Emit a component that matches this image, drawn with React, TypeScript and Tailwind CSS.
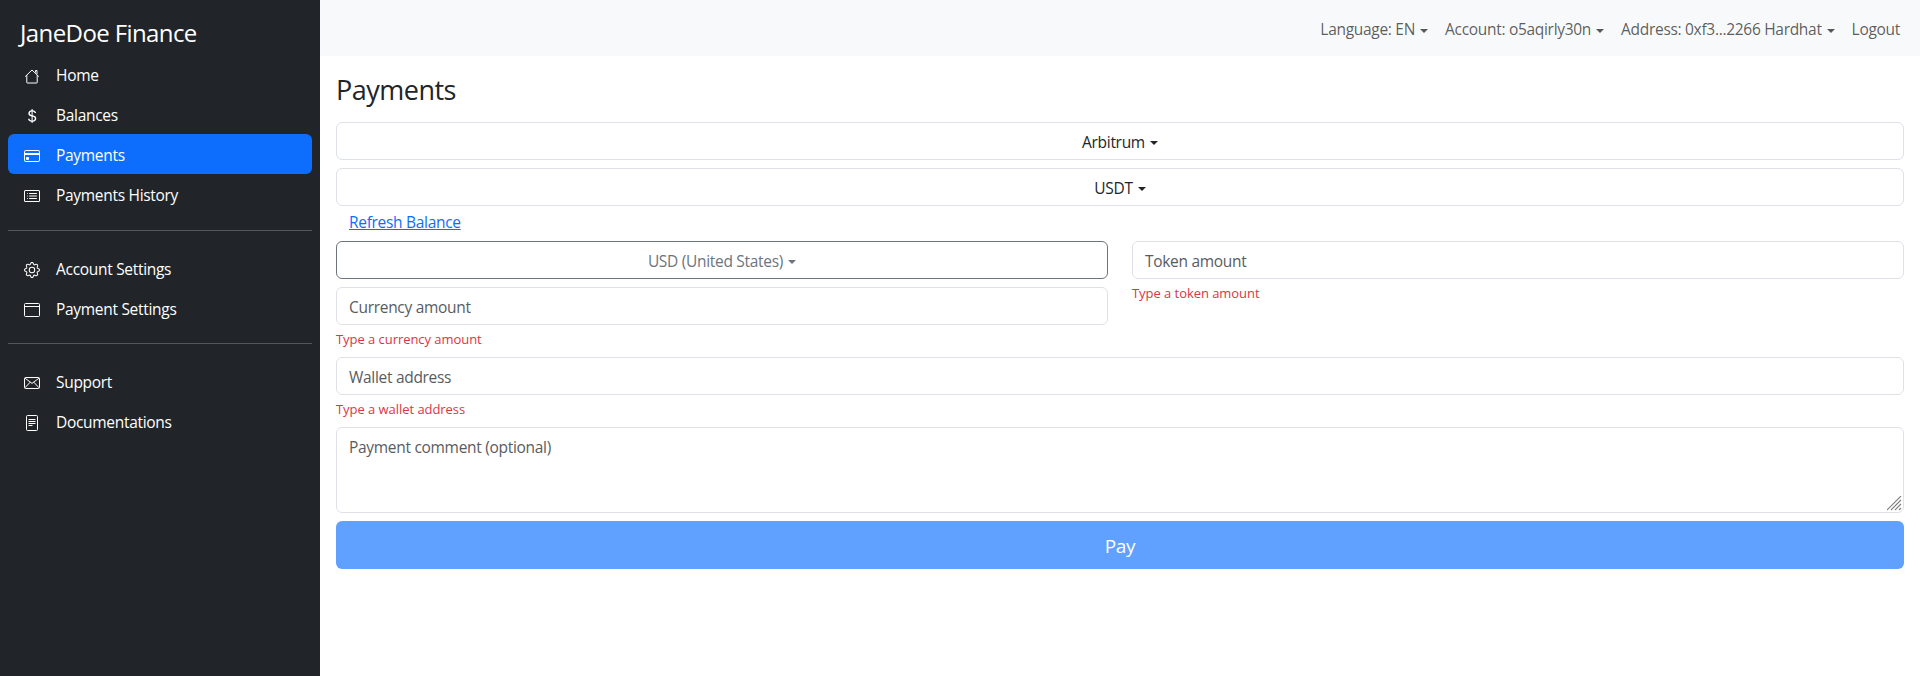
import React from 'react';
import { BsCurrencyDollar, BsCreditCard, BsCardList, BsGear } from 'react-icons/bs';

const font = "font-['Open_Sans','Noto_Sans',sans-serif]";

const HouseIcon = () => (
  <svg width="16" height="16" viewBox="0 0 16 16" fill="none" stroke="currentColor" strokeWidth="1">
    <path d="M1.2 8.6 8 2l6.8 6.6" />
    <path d="M2.8 7.2v7.3a.5.5 0 0 0 .5.5h9.4a.5.5 0 0 0 .5-.5V7.2" />
    <path d="M11.5 4.5V2.5H13v3.6" />
  </svg>
);

const WindowIcon = () => (
  <svg width="16" height="16" viewBox="0 0 16 16" fill="none" stroke="currentColor" strokeWidth="1">
    <rect x="0.5" y="1.5" width="15" height="13" rx="1" />
    <path d="M.5 4.5h15" />
  </svg>
);

const EnvelopeIcon = () => (
  <svg width="16" height="16" viewBox="0 0 16 16" fill="none" stroke="currentColor" strokeWidth="1">
    <rect x="0.5" y="2.5" width="15" height="11" rx="1" />
    <path d="M1 3.2 8 8.4l7-5.2M1 12.8l5.2-5.6M15 12.8 9.8 7.2" />
  </svg>
);

const FileIcon = () => (
  <svg width="16" height="16" viewBox="0 0 16 16" fill="none" stroke="currentColor" strokeWidth="1">
    <rect x="2.5" y="0.5" width="11" height="15" rx="1" />
    <path d="M4.5 4.5h7M4.5 6.5h7M4.5 8.5h7M4.5 10.5h4" />
  </svg>
);

const NavItem: React.FC<{ icon: React.ReactNode; label: string; active?: boolean }> = ({ icon, label, active }) => (
  <a className={`flex h-10 items-center rounded-md px-4 pt-1 text-[15.5px] tracking-[-0.3px] text-white ${active ? 'bg-[#0d6efd]' : ''}`}>
    <span className="mr-4 flex w-4 justify-center text-base">{icon}</span>
    {label}
  </a>
);

const Caret = () => <span className="ml-[5px] inline-block border-x-4 border-t-4 border-x-transparent border-t-current align-middle" />;

const Field: React.FC<{ placeholder: string; error?: string }> = ({ placeholder, error }) => (
  <div>
    <div className="flex h-[38px] items-center rounded-md border border-[#dee2e6] px-3 pt-1 text-[#595c5f]">{placeholder}</div>
    {error && <p className="mt-1 text-[13px] leading-5 tracking-[-0.05px] text-[#dc3545]">{error}</p>}
  </div>
);

const SelectButton: React.FC<{ label: string; muted?: boolean }> = ({ label, muted }) => (
  <button className={`flex h-[38px] w-full items-center justify-center rounded-md border pt-[3px] ${muted ? 'border-[#6c757d] text-[#6c757d]' : 'border-[#dee2e6] text-[#212529]'}`}>
    {label}
    <Caret />
  </button>
);

const App: React.FC = () => {
  return (
    <div className={`flex h-[676px] w-[1920px] overflow-hidden bg-white text-[15.5px] tracking-[-0.3px] ${font}`}>
      <aside className="flex w-80 shrink-0 flex-col bg-[#212529] px-2 text-white">
        <div className="flex h-[54px] items-center px-3 pt-3 text-2xl tracking-[-0.6px]">JaneDoe Finance</div>
        <NavItem icon={<HouseIcon />} label="Home" />
        <NavItem icon={<BsCurrencyDollar />} label="Balances" />
        <NavItem icon={<BsCreditCard />} label="Payments" active />
        <NavItem icon={<BsCardList />} label="Payments History" />
        <hr className="mt-4 mb-[17px] border-[#53565a]" />
        <NavItem icon={<BsGear />} label="Account Settings" />
        <NavItem icon={<WindowIcon />} label="Payment Settings" />
        <hr className="mt-[15px] mb-[17px] border-[#53565a]" />
        <NavItem icon={<EnvelopeIcon />} label="Support" />
        <NavItem icon={<FileIcon />} label="Documentations" />
      </aside>
      <div className="flex min-w-0 flex-1 flex-col">
        <header className="flex h-14 items-center justify-end gap-[17px] bg-[#f8f9fa] pt-1 pr-5 text-[#000000a6]">
          <span>Language: EN<Caret /></span>
          <span>Account: o5aqirly30n<Caret /></span>
          <span>Address: 0xf3...2266 Hardhat<Caret /></span>
          <span>Logout</span>
        </header>
        <main className="px-4 text-[#212529]">
          <h3 className="mt-[15px] mb-[14px] text-[27px] leading-[37px] tracking-[-0.5px]">Payments</h3>
          <div className="flex flex-col gap-2">
            <SelectButton label="Arbitrum" />
            <SelectButton label="USDT" />
            <a className="-mt-1 mb-[-1px] block px-[13px] leading-6 text-[#0d6efd] underline">Refresh Balance</a>
            <div className="grid grid-cols-2 gap-6">
              <div className="flex flex-col gap-2">
                <SelectButton label="USD (United States)" muted />
                <Field placeholder="Currency amount" error="Type a currency amount" />
              </div>
              <Field placeholder="Token amount" error="Type a token amount" />
            </div>
            <Field placeholder="Wallet address" error="Type a wallet address" />
            <div className="relative">
              <textarea
                placeholder="Payment comment (optional)"
                className="block h-[86px] w-full resize-none rounded-md border border-[#dee2e6] px-3 pt-[7px] leading-6 outline-none placeholder:text-[#595c5f]"
              />
              {/* chrome's resize grip */}
              <svg className="absolute right-[2px] bottom-[2px]" width="15" height="15" viewBox="0 0 15 15" stroke="#808080" strokeWidth="1.1">
                <path d="M0 14 14 0M4 14 14 4M8 14l6-6M12 14l2-2" />
              </svg>
            </div>
            <button className="h-12 w-full rounded-md bg-[#60a0ff] pt-[3px] text-[19px] text-white">Pay</button>
          </div>
        </main>
      </div>
    </div>
  );
};

export default App;
